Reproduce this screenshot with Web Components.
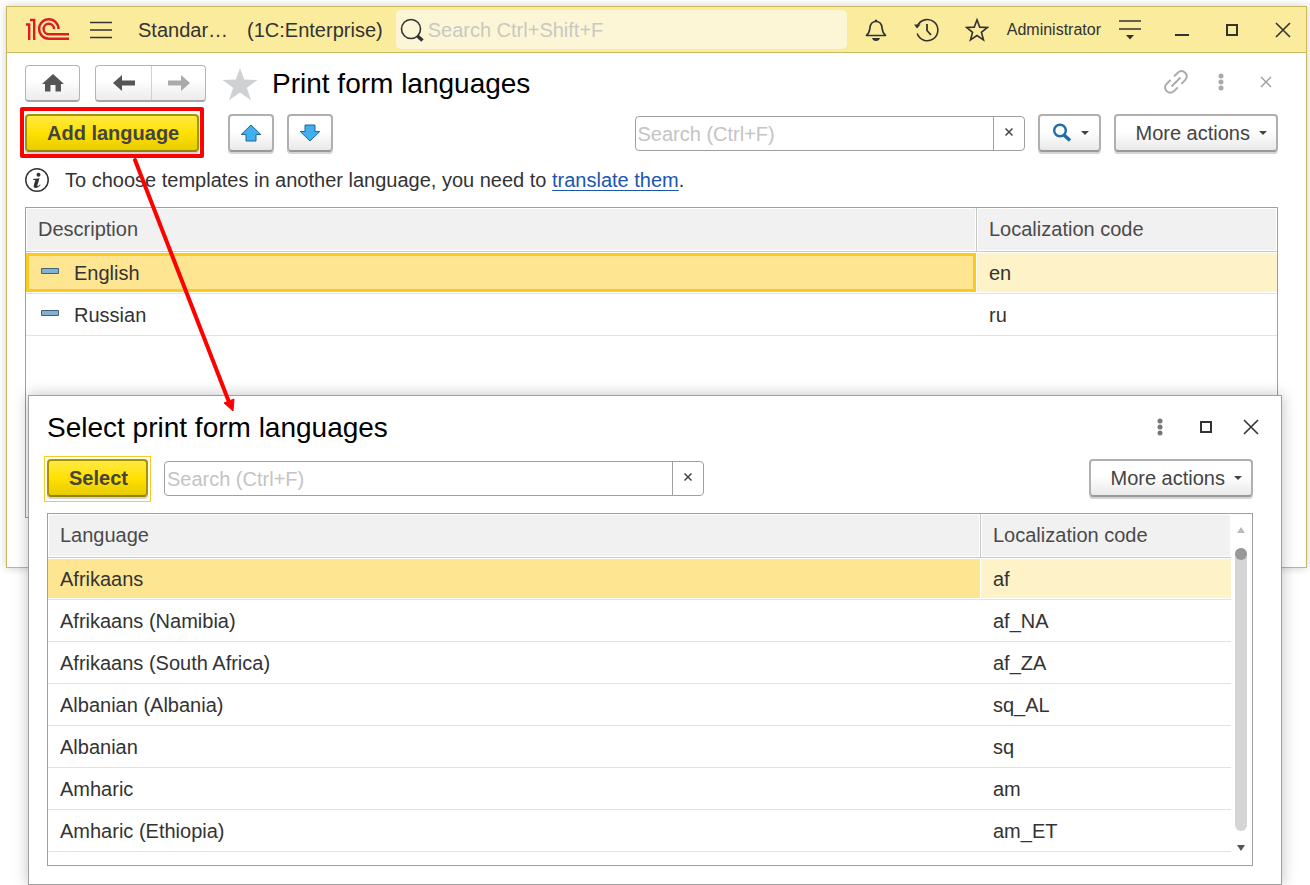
<!DOCTYPE html>
<html lang="en">
<head>
<meta charset="utf-8">
<meta name="viewport" content="width=device-width, initial-scale=1">
<title>Print form languages</title>
<style>
  html { background: #fff; }
  body {
    margin: 0;
    min-height: 100vh;
    font: 20px/24px "Liberation Sans", Arial, sans-serif;
    color: #333;
  }
</style>
</head>
<body>
<language-desktop></language-desktop>

<script>
const ICONS = {
  logo: [45, 24, '<g fill="none" stroke="#dc1e24" stroke-width="2.400"><path d="M1 6.500h3.200V22M5 2h4.200v20" /><path d="M33.500 11a9.700 9.700 0 1 0-9.700 9.700H44"/><path d="M29 11a5.200 5.200 0 1 0-5.200 5.200H44"/></g>'],
  menu: [22, 18, '<path d="M0 1.500h22M0 9h22M0 16.500h22" stroke="#333" stroke-width="1.600"/>'],
  glass: [24, 24, '<g fill="none" stroke="#333"><circle cx="11" cy="11" r="9.500" stroke-width="1.600"/><path d="M17.500 18l5 4.500" stroke-width="3.500"/></g>'],
  bell: [22, 24, '<path d="M1.500 17.500c3-2.500 3-4 3.500-8 .5-4 2.500-6 6-6s5.500 2 6 6c.5 4 .5 5.500 3.500 8z" fill="none" stroke="#333" stroke-width="1.700" stroke-linejoin="round"/><path d="M9.500 3.500a1.500 2 0 0 1 3 0zM7 20h8c-.5 1.800-2 3-4 3s-3.500-1.200-4-3z" fill="#333"/>'],
  history: [26, 24, '<path d="M4.500 8a10.600 10.600 0 1 1-.3 7.500" fill="none" stroke="#333" stroke-width="1.600"/><path d="M14 6v6.500l4 4.500" fill="none" stroke="#333" stroke-width="1.800"/><path d="M1 6.500h6.500L4 10.500z" fill="#333"/>'],
  star: [24, 24, '<path d="M12 1.800l2.700 7.300 7.800.3-6.100 4.900 2.100 7.500L12 17.500l-6.500 4.300 2.100-7.500L1.500 9.400l7.800-.3z" fill="none" stroke="#333" stroke-width="1.600"/>'],
  service: [22, 22, '<path d="M0 2h22M0 10h22" stroke="#333" stroke-width="1.600"/><path d="M7 16h8l-4 4.500z" fill="#333"/>'],
  minimize: [14, 14, '<path d="M0 12h14" stroke="#333" stroke-width="2"/>'],
  maximize: [14, 14, '<path d="M2 2h10v10H2z" fill="none" stroke="#333" stroke-width="2"/>'],
  close: [16, 16, '<path d="M1 1l14 14M15 1L1 15" stroke="#333" stroke-width="1.600"/>'],
  closeSmall: [12, 12, '<path d="M1 1l10 10M11 1L1 11" stroke="#999" stroke-width="1.300"/>'],
  clear: [8, 8, '<path d="M.500 .500l7 7M7.500 .500l-7 7" stroke="#444" stroke-width="1.500"/>'],
  home: [22, 20, '<path d="M11 1L22 11h-3v7.500h-5.500V12h-5v6.500H3V11H0z" fill="#555"/>'],
  back: [22, 16, '<path d="M0 8l9-8v5.500h13v5H9V16z" fill="#555"/>'],
  forward: [22, 16, '<path d="M22 8l-9-8v5.500H0v5h13V16z" fill="#aaa"/>'],
  favorite: [36, 34, '<path d="M18 1l4.200 11.600L35.500 13l-10.700 7.800L29 33.200 18 25.600 7 33.200l4.200-12.400L.500 13l13.300-.4z" fill="#cfd0d2"/>'],
  link: [24, 24, '<g fill="none" stroke="#aaa" stroke-width="1.900"><path d="M10 6.500l4-4c5-4.200 11.500 2.500 7.300 7.300l-4 4M6.500 10l-4 4c-4.200 5 2.500 11.500 7.300 7.300l4-4M7.500 16.500l9-9"/></g>'],
  dotsLight: [6, 18, '<g fill="#aaa"><circle cx="3" cy="3" r="2.500"/><circle cx="3" cy="9" r="2.500"/><circle cx="3" cy="15" r="2.500"/></g>'],
  dots: [6, 18, '<g fill="#777"><circle cx="3" cy="3" r="2.500"/><circle cx="3" cy="9" r="2.500"/><circle cx="3" cy="15" r="2.500"/></g>'],
  up: [22, 18, '<path d="M11 1l9.800 9.500H16V17H6v-6.500H1.200z" fill="#42aeee" stroke="#1d6795" stroke-linejoin="round"/>'],
  down: [22, 18, '<path d="M11 17L1.200 7.500H6V1h10v6.500h4.800z" fill="#42aeee" stroke="#1d6795" stroke-linejoin="round"/>'],
  find: [20, 20, '<g fill="none" stroke="#1e6fa8"><circle cx="8" cy="7.500" r="5.800" stroke-width="2.400"/><path d="M12 12l6 5.500" stroke-width="3.500"/></g>'],
  caret: [8, 4, '<path d="M0 0h8L4 4z" fill="#444"/>'],
  info: [24, 24, '<circle cx="12" cy="12" r="11.200" fill="none" stroke="#333" stroke-width="1.500"/><circle cx="13.500" cy="6.700" r="2" fill="#333"/><path d="M8.300 11l6.200-.8-2.200 7.300c-.2 1 1 .6 2.700-1l.6.600c-3.600 4.200-8 3.200-6.800.2l1.600-5.300H8z" fill="#333"/>'],
  item: [18, 6, '<path d="M.500 .500h17v5H.500z" fill="#86b0d2" stroke="#3f637f"/>'],
  scrollUp: [8, 6, '<path d="M0 6h8L4 0z" fill="#bbb"/>'],
  scrollDown: [8, 6, '<path d="M0 0h8L4 6z" fill="#555"/>']
};

/* Base class: fills an open shadow root from styles() and markup(). */
class Base extends HTMLElement {
  connectedCallback() {
    if (this.shadowRoot) return;
    this.attachShadow({ mode: "open" }).innerHTML =
      `<style>*{box-sizing:border-box}:host([hidden]){display:none}${this.styles()}</style>${this.markup()}`;
  }
}

customElements.define("ui-icon", class extends Base {
  styles() { return ":host{display:inline-flex;flex:none}svg{display:block}"; }
  markup() {
    const [w, h, body] = ICONS[this.getAttribute("name")];
    return `<svg width="${w}" height="${h}" viewBox="0 0 ${w} ${h}" aria-hidden="true">${body}</svg>`;
  }
});

/* Borderless button that holds a single icon. */
customElements.define("icon-button", class extends Base {
  styles() {
    return `:host{display:inline-flex;flex:none}
      button{display:flex;align-items:center;justify-content:center;width:100%;padding:0;border:0;background:none;cursor:pointer}`;
  }
  markup() {
    return `<button type="button" aria-label="${this.getAttribute("label")}"><ui-icon name="${this.getAttribute("icon")}"></ui-icon></button>`;
  }
});

/* Raised command button; kinds: primary, menu, find, or plain when unset. */
customElements.define("push-button", class extends Base {
  styles() {
    return `:host{display:inline-flex;flex:none;position:relative}
      button{display:flex;align-items:center;justify-content:center;gap:9px;height:38px;padding:0 10px;
        font:inherit;color:#444;cursor:pointer;border:2px solid #b0b0b0;border-bottom-color:#999;border-radius:4px;
        background:linear-gradient(#fff 45%,#e9e9e9);box-shadow:0 2px 0 #d4d4d4}
      :host([kind=primary]) button{padding:0 18px 0 20px;font-weight:bold;border-color:#a99300;border-bottom-color:#958200;
        background:linear-gradient(#ffe945,#ffe100 50%,#e8cc00)}
      :host([kind=menu]) button{padding:0 9px 0 20px}
      :host([kind=find]) button{padding:0 10px 0 12px}
      :host([default])::after{content:"";position:absolute;inset:-3px;bottom:-5px;border:1px solid #fbca23;pointer-events:none}`;
  }
  markup() {
    const label = this.getAttribute("label");
    return `<button type="button"${label ? ` aria-label="${label}"` : ""}><slot></slot></button>`;
  }
});

customElements.define("nav-buttons", class extends Base {
  styles() {
    return `:host{display:flex;gap:15px}
      div{display:flex;height:37px;border:1px solid #b4b4b4;border-bottom:2px solid #a6a6a6;border-radius:4px;
        background:linear-gradient(#fff 40%,#ececec);overflow:hidden}
      button{display:flex;align-items:center;justify-content:center;width:54px;padding:0;border:0;background:none}
      button+button{border-left:1px solid #d0d0d0}
      .home button{width:53px}`;
  }
  markup() {
    return `<div class="home"><button type="button" aria-label="Home"><ui-icon name="home"></ui-icon></button></div>
      <div><button type="button" aria-label="Back" style="width:55px"><ui-icon name="back"></ui-icon></button>
      <button type="button" aria-label="Forward"><ui-icon name="forward"></ui-icon></button></div>`;
  }
});

customElements.define("search-box", class extends Base {
  styles() {
    return `:host{display:flex}
      form{display:flex;width:100%;height:35px;border:1px solid #a0a0a0;border-radius:4px;background:#fff;overflow:hidden}
      input{flex:1;min-width:0;margin:0;padding:1px 0 0 2px;border:0;outline:0;background:none;font:inherit;color:#333}
      input::placeholder{color:#c4c4c4;opacity:1}
      button{display:flex;align-items:center;justify-content:center;width:31px;padding:0 0 2px;border:0;border-left:1px solid #a0a0a0;background:none}`;
  }
  markup() {
    return `<form role="search"><input type="text" placeholder="Search (Ctrl+F)" aria-label="Search">
      <button type="button" aria-label="Clear"><ui-icon name="clear"></ui-icon></button></form>`;
  }
});

customElements.define("title-bar", class extends Base {
  styles() {
    return `:host{display:flex;align-items:center;height:46px;padding:0 15px 0 18px;background:#faeb9d;border-bottom:1px solid #c8b95f}
      .app{margin-left:26px;white-space:nowrap}
      .platform{margin-left:19px;white-space:nowrap}
      label{display:flex;align-items:center;flex:1;min-width:0;height:39px;margin-left:13px;padding-left:4px;border-radius:5px;background:#fdf6d6}
      input{flex:1;min-width:0;margin:0;padding:0 0 0 4px;border:0;outline:0;background:none;font:inherit;color:#333}
      input::placeholder{color:#c9c8c3;opacity:1}
      .tools{display:flex;align-items:center;gap:26px;margin-left:18px}
      a{font-size:16px;color:#333;text-decoration:none;margin:0 18px}
      .window{display:flex;align-items:center;gap:36px;margin-left:34px}`;
  }
  markup() {
    return `<ui-icon name="logo"></ui-icon>
      <icon-button icon="menu" label="Main menu" style="margin-left:20px"></icon-button>
      <span class="app">Standar…</span><span class="platform">(1C:Enterprise)</span>
      <label><ui-icon name="glass"></ui-icon><input type="text" placeholder="Search Ctrl+Shift+F" aria-label="Search everywhere"></label>
      <div class="tools"><icon-button icon="bell" label="Notifications"></icon-button>
        <icon-button icon="history" label="History"></icon-button>
        <icon-button icon="star" label="Favorites"></icon-button></div>
      <a href="#user">Administrator</a>
      <icon-button icon="service" label="Service and settings"></icon-button>
      <div class="window"><icon-button icon="minimize" label="Minimize"></icon-button>
        <icon-button icon="maximize" label="Maximize"></icon-button>
        <icon-button icon="close" label="Close"></icon-button></div>`;
  }
});

/* Two-column list. Attributes: columns and rows ("a|b;c|d"), marked, focused, scrollable. */
customElements.define("data-grid", class extends Base {
  styles() {
    return `:host{display:flex;border:1px solid #a0a0a0;background:#fff;--code-width:300px}
      table{flex:1;min-width:0;align-self:flex-start;table-layout:fixed;border-collapse:separate;border-spacing:0}
      th,td{padding:0;text-align:left;font-weight:normal}
      th:last-child{width:var(--code-width)}
      th{border-bottom:1px solid #c8c8c8;color:#4a4a4a}
      th:first-child{border-right:1px solid #c8c8c8}
      th div{height:41px;margin:1px;padding:8px 11px;background:#f1f1f1}
      td{border-bottom:1px solid #e2e2e2}
      td div{display:flex;align-items:center;height:39px;margin:1px 0;padding:0 12px}
      td:first-child div{margin-right:1px}
      td ui-icon{margin:0 15px 3px 3px}
      tr.current td:first-child div{background:#fee591}
      tr.current td:last-child div{background:#fdf2c8}
      :host([focused]) tr.current td:first-child div{box-shadow:inset 0 0 0 3px #fcc922}
      .scroll{display:flex;flex-direction:column;align-items:center;width:21px;padding:13px 2px 14px 0}
      .track{flex:1;width:12px;margin:15px 0 14px;border-radius:6px;background:#d5d5d5}
      .thumb{height:12px;border-radius:6px;background:#999}`;
  }
  markup() {
    const split = name => this.getAttribute(name).split(";").map(row => row.split("|"));
    const icon = this.hasAttribute("marked") ? '<ui-icon name="item"></ui-icon>' : "";
    const [head] = split("columns");
    const rows = split("rows").map(([name, code], i) =>
      `<tr${i ? "" : ' class="current"'}><td><div>${icon}${name}</div></td><td><div>${code}</div></td></tr>`).join("");
    const scroll = this.hasAttribute("scrollable")
      ? '<div class="scroll"><ui-icon name="scrollUp"></ui-icon><div class="track"><div class="thumb"></div></div><ui-icon name="scrollDown"></ui-icon></div>' : "";
    return `<table><thead><tr>${head.map(h => `<th scope="col"><div>${h}</div></th>`).join("")}</tr></thead><tbody>${rows}</tbody></table>${scroll}`;
  }
});

customElements.define("languages-window", class extends Base {
  styles() {
    return `:host{display:block;border:1px solid #c8b95f;background:#fff;box-shadow:0 0 8px rgba(0,0,0,.2)}
      main{padding:12px 28px 49px 18px}
      header,.commands,.note{display:flex;align-items:center}
      header{height:37px}
      header>ui-icon{margin:0 14px 0 16px}
      h1{flex:1;margin:0;font-size:28px;line-height:32px;font-weight:normal;color:#000}
      .form{display:flex;align-items:center;margin:0 6px 4px 0}
      .commands{height:38px;margin-top:12px}
      .marked{position:relative;display:flex}
      .marked::after{content:"";position:absolute;inset:-7px -5px -6px;border:4px solid #f00;border-radius:2px;pointer-events:none}
      search-box{width:390px;margin:0 13px 0 auto}
      .note{gap:16px;height:24px;margin:16px 0 15px;color:#333}
      p{margin:0}
      a{color:#1a55b0;text-decoration-thickness:1px;text-underline-offset:3px}
      data-grid{min-height:311px}`;
  }
  markup() {
    return `<title-bar></title-bar><main>
      <header><nav-buttons></nav-buttons><ui-icon name="favorite"></ui-icon><h1>Print form languages</h1>
        <div class="form"><icon-button icon="link" label="Get link"></icon-button>
        <icon-button icon="dotsLight" label="More" style="margin:0 36px 0 30px"></icon-button>
        <icon-button icon="closeSmall" label="Close form"></icon-button></div></header>
      <div class="commands"><span class="marked"><push-button kind="primary">Add language</push-button></span>
        <push-button label="Move up" style="margin:0 13px 0 29px"><ui-icon name="up"></ui-icon></push-button>
        <push-button label="Move down"><ui-icon name="down"></ui-icon></push-button>
        <search-box></search-box>
        <push-button kind="find" label="Find" style="margin-right:13px"><ui-icon name="find"></ui-icon><ui-icon name="caret"></ui-icon></push-button>
        <push-button kind="menu">More actions<ui-icon name="caret"></ui-icon></push-button></div>
      <div class="note"><ui-icon name="info"></ui-icon><p>To choose templates in another language, you need to <a href="#translate">translate them</a>.</p></div>
      <data-grid marked focused columns="Description|Localization code" rows="English|en;Russian|ru"></data-grid>
    </main>`;
  }
});

customElements.define("select-dialog", class extends Base {
  styles() {
    return `:host{display:block;padding:15px 28px 18px 18px;border:1px solid #a0a0a0;background:#fff;box-shadow:0 0 14px rgba(0,0,0,.25)}
      header,.commands{display:flex;align-items:center}
      header{height:34px}
      h2{flex:1;margin:0;font-size:28px;line-height:32px;font-weight:normal;color:#000}
      .window{display:flex;align-items:center;gap:30px;margin:0 -6px 2px 0}
      .commands{height:38px;margin:14px 0 16px}
      search-box{width:540px;margin-left:16px}
      push-button:last-child{margin-left:auto}
      data-grid{height:353px;--code-width:250px}`;
  }
  markup() {
    return `<header><h2>Select print form languages</h2><div class="window">
        <icon-button icon="dots" label="More"></icon-button>
        <icon-button icon="maximize" label="Maximize" style="margin-left:6px"></icon-button>
        <icon-button icon="close" label="Close"></icon-button></div></header>
      <div class="commands"><push-button kind="primary" default>Select</push-button><search-box></search-box>
        <push-button kind="menu">More actions<ui-icon name="caret"></ui-icon></push-button></div>
      <data-grid scrollable columns="Language|Localization code"
        rows="Afrikaans|af;Afrikaans (Namibia)|af_NA;Afrikaans (South Africa)|af_ZA;Albanian (Albania)|sq_AL;Albanian|sq;Amharic|am;Amharic (Ethiopia)|am_ET"></data-grid>`;
  }
});

customElements.define("callout-arrow", class extends Base {
  styles() { return ":host{display:block;pointer-events:none}svg{display:block}"; }
  markup() {
    return `<svg width="104" height="256" viewBox="0 0 104 256" aria-hidden="true"><path d="M3 3L97 245" stroke="#f00" stroke-width="4" stroke-linecap="round"/><path d="M92 246l10-4-1 12z" fill="#f00" stroke="#f00"/></svg>`;
  }
});

customElements.define("language-desktop", class extends Base {
  styles() {
    return `:host{display:block;position:relative;min-height:100vh;overflow:hidden}
      languages-window{margin:6px 3px 0 6px}
      select-dialog{position:absolute;top:395px;left:28px;right:28px}
      callout-arrow{position:absolute;top:157px;left:132px}`;
  }
  markup() {
    return "<languages-window></languages-window><select-dialog></select-dialog><callout-arrow></callout-arrow>";
  }
});
</script>
</body>
</html>
